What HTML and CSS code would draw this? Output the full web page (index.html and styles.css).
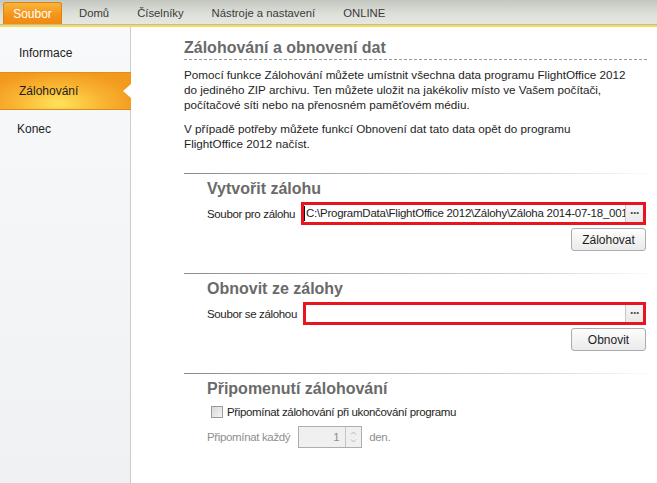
FILE: index.html
```html
<!DOCTYPE html>
<html>
<head>
    <title>FlightOffice 2012 - Zálohování</title>
    <link rel="stylesheet" href="styles.css">
</head>
<body>
    <div class="tabbar">
        <div class="tab active">Soubor</div>
        <div class="tab">Domů</div>
        <div class="tab">Číselníky</div>
        <div class="tab">Nástroje a nastavení</div>
        <div class="tab">ONLINE</div>
    </div>
    <div class="window">
        <div class="sidebar">
            <div class="nav-item">Informace</div>
            <div class="nav-item selected">Zálohování<span class="pointer"></span></div>
            <div class="nav-item">Konec</div>
        </div>
        <div class="main">
            <h1>Zálohování a obnovení dat</h1>
            <p>Pomocí funkce Zálohování můžete umístnit všechna data programu FlightOffice 2012<br>do jediného ZIP archivu. Ten můžete uložit na jakékoliv místo ve Vašem počítači,<br>počítačové síti nebo na přenosném paměťovém médiu.</p>
            <p>V případě potřeby můžete funkcí Obnovení dat tato data opět do programu<br>FlightOffice 2012 načíst.</p>

            <div class="section first">
                <h2>Vytvořit zálohu</h2>
                <div class="file-row">
                    <span class="label">Soubor pro zálohu</span>
                    <div class="file-box">
                        <div class="file-text">C:\ProgramData\FlightOffice 2012\Zálohy\Záloha 2014-07-18_001.zip</div>
                        <div class="browse">&middot;&middot;&middot;</div>
                    </div>
                </div>
                <div class="actions"><button>Zálohovat</button></div>
            </div>

            <div class="section">
                <h2>Obnovit ze zálohy</h2>
                <div class="file-row">
                    <span class="label">Soubor se zálohou</span>
                    <div class="file-box">
                        <div class="file-text"></div>
                        <div class="browse">&middot;&middot;&middot;</div>
                    </div>
                </div>
                <div class="actions"><button>Obnovit</button></div>
            </div>

            <div class="section">
                <h2>Připomenutí zálohování</h2>
                <label class="check-row"><span class="checkbox"></span>Připomínat zálohování při ukončování programu</label>
                <div class="spin-row">
                    <span>Připomínat každý</span>
                    <div class="spinner">
                        <span class="spin-value">1</span>
                        <span class="spin-buttons">
                            <svg width="7" height="4" viewBox="0 0 7 4"><path d="M1 3.5 L3.5 1 L6 3.5" fill="none" stroke="#b8b8b8" stroke-width="1"/></svg>
                            <svg width="7" height="4" viewBox="0 0 7 4"><path d="M1 0.5 L3.5 3 L6 0.5" fill="none" stroke="#b8b8b8" stroke-width="1"/></svg>
                        </span>
                    </div>
                    <span>den.</span>
                </div>
            </div>
        </div>
    </div>
</body>
</html>
```

FILE: styles.css
```css
body {
    margin: 0;
    font-family: "Liberation Sans", Arial, sans-serif;
    font-size: 11.7px;
    color: #1e1e1e;
    background-color: #fff;
    height: 483px;
    display: flex;
    flex-direction: column;
    overflow: hidden;
}

.tabbar {
    display: flex;
    align-items: flex-end;
    height: 24px;
    padding-left: 3px;
    background: linear-gradient(to bottom, #c4c7c0, #dcdfd8 55%, #e6e7e3);
    border-bottom: 1px solid #b9bcb4;
    box-shadow: 0 2px 0 #fdd94c;
    margin-bottom: 2px;
}

.tab {
    height: 22px;
    line-height: 22px;
    padding: 0 14px;
    color: #3a3a3a;
    font-size: 11.3px;
}

.tab.active {
    width: 59px;
    padding: 0;
    margin-right: 3px;
    text-align: center;
    color: #fff;
    font-size: 12px;
    background: linear-gradient(to bottom, #f9b43a, #f4931a 60%, #f08a12);
    border: 1px solid #e0820f;
    border-bottom: none;
    border-radius: 3px 3px 0 0;
    box-sizing: border-box;
}

.window {
    flex: 1;
    display: flex;
}

.sidebar {
    flex: 0 0 131px;
    padding-top: 7px;
    background: linear-gradient(to bottom, #f8f9fa, #eff1f3);
    border-right: 1px solid #c9ccd1;
    box-sizing: border-box;
    font-size: 12px;
}

.nav-item {
    position: relative;
    height: 38px;
    line-height: 38px;
    padding-left: 19px;
    color: #1e1e1e;
}

.nav-item:last-child {
    padding-left: 17px;
}

.nav-item.selected {
    background: radial-gradient(ellipse 60% 90% at 45% 85%, #ffe35a, #f9b531 55%, #f29a1e);
    border-top: 1px solid #e48c16;
    border-bottom: 1px solid #dd8a1b;
    line-height: 36px;
    margin-right: -1px;
    box-sizing: border-box;
}

.pointer {
    position: absolute;
    right: 0;
    top: 11px;
    width: 0;
    height: 0;
    border-top: 7px solid transparent;
    border-bottom: 7px solid transparent;
    border-right: 8px solid #fff;
}

.main {
    flex: 1;
    min-width: 0;
    padding: 11px 10px 0 53px;
}

h1 {
    margin: 0;
    font-size: 16px;
    line-height: 20px;
    color: #6a6a6a;
    padding-bottom: 1px;
    border-bottom: 1px dashed #9a9a9a;
}

p {
    margin: 7px 0 0;
    line-height: 15px;
}

p + p {
    margin-top: 9px;
}

.section {
    padding: 6px 11px 22px 23px;
    margin-right: -10px;
    font-size: 11.5px;
    letter-spacing: -0.35px;
    background: linear-gradient(to right, #8c8c8c, #d6d6d6 75%, #ffffff) no-repeat top left / 100% 1px;
}

.section.first {
    margin-top: 22px;
}

h2 {
    margin: 0;
    font-size: 16px;
    letter-spacing: 0;
    line-height: 20px;
    color: #6a6a6a;
}

.file-row {
    display: flex;
    align-items: center;
    margin-top: 3px;
}

.label {
    margin-right: 6px;
    white-space: nowrap;
}

.file-box {
    flex: 1;
    display: flex;
    height: 23px;
    border: 3px solid #e8141f;
    box-sizing: border-box;
    background-color: #fff;
    min-width: 0;
}

.file-text {
    flex: 1;
    min-width: 0;
    overflow: hidden;
    white-space: nowrap;
    padding-left: 1px;
    border-left: 1px solid #000;
    margin: 1px 0;
    line-height: 15px;
    letter-spacing: -0.25px;
}

.file-text:empty {
    border-left: none;
}

.browse {
    width: 17px;
    border-left: 1px solid #c6c6c6;
    background: linear-gradient(to bottom, #f7f7f7, #e9e9e9);
    color: #444;
    font-weight: bold;
    text-align: center;
    line-height: 16px;
    font-size: 12px;
    letter-spacing: -1px;
}

.actions {
    display: flex;
    justify-content: flex-end;
    margin-top: 3px;
}

button {
    width: 75px;
    height: 23px;
    font-family: "Liberation Sans", Arial, sans-serif;
    font-size: 12px;
    color: #1e1e1e;
    background: linear-gradient(to bottom, #fdfdfd, #eaeaea);
    border: 1px solid #a9acb0;
    border-radius: 3px;
    padding: 0;
}

.check-row {
    display: flex;
    align-items: center;
    height: 15px;
    margin-top: 5px;
    padding-left: 4px;
}

.checkbox {
    width: 10px;
    height: 10px;
    border: 1px solid #9a9a9a;
    background: linear-gradient(135deg, #d8d8d8, #f4f4f4);
    margin-right: 4px;
}

.spin-row {
    display: flex;
    align-items: center;
    margin-top: 7px;
    color: #8e8e8e;
}

.spinner {
    display: flex;
    width: 64px;
    height: 22px;
    margin: 0 7px 0 8px;
    border: 1px solid #adadad;
    background-color: #f0f0f0;
    box-sizing: border-box;
}

.spin-value {
    flex: 1;
    text-align: right;
    line-height: 20px;
    padding-right: 6px;
    color: #8e8e8e;
}

.spin-buttons {
    width: 15px;
    border-left: 1px solid #c4c4c4;
    display: flex;
    flex-direction: column;
    align-items: center;
    justify-content: center;
    gap: 4px;
}

.spin-buttons svg {
    display: block;
}
```
